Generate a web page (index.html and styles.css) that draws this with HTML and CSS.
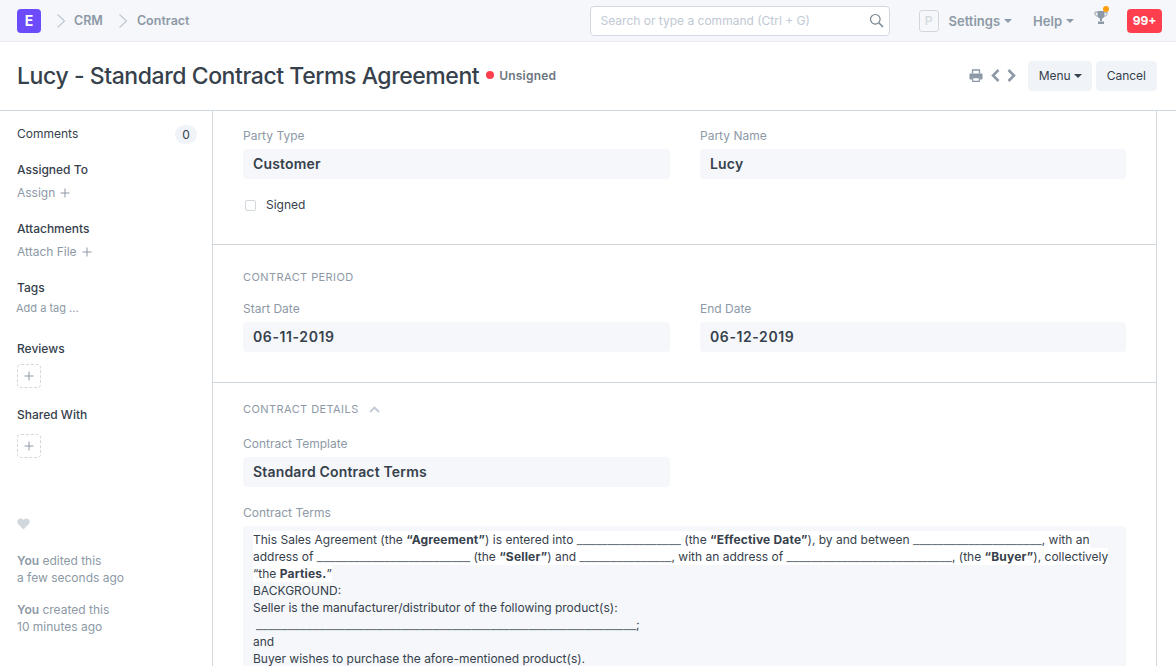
FILE: index.html
```html
<!DOCTYPE html>
<html lang="en">
<head>
<meta charset="utf-8">
<title>Contract</title>
<link rel="stylesheet" href="styles.css">
</head>
<body>
<header class="navbar">
  <div class="logo">E</div>
  <svg class="crumb-sep" width="10" height="16" viewBox="0 0 10 16"><path d="M1.500 1.500 8.500 8 1.500 14.500" fill="none" stroke="#c0c9d4" stroke-width="1.200"/></svg>
  <a class="crumb">CRM</a>
  <svg class="crumb-sep" width="10" height="16" viewBox="0 0 10 16"><path d="M1.500 1.500 8.500 8 1.500 14.500" fill="none" stroke="#c0c9d4" stroke-width="1.200"/></svg>
  <a class="crumb">Contract</a>
  <div class="nav-right">
    <div class="search">
      <span class="search-text">Search or type a command (Ctrl + G)</span>
      <svg width="15" height="15" viewBox="0 0 15 15"><circle cx="6.300" cy="6.300" r="4.800" fill="none" stroke="#74808b" stroke-width="1.200"/><path d="M10 10l4 4" stroke="#74808b" stroke-width="1.400"/></svg>
    </div>
    <div class="avatar">P</div>
    <a class="nav-link nav-settings">Settings<i class="caret"></i></a>
    <a class="nav-link nav-help">Help<i class="caret"></i></a>
    <div class="trophy">
      <svg width="14" height="15" viewBox="0 0 14 15"><path d="M3.500 1h7v4.200c0 2-1.500 3.400-3.500 3.400S3.500 7.200 3.500 5.200zM6 8h2v3H6zM4 11.500h6V14H4z" fill="#8d99a6"/><path d="M3.500 2.200H1v1.500c0 1.500 1.200 2.500 2.800 2.500M10.500 2.200H13v1.500c0 1.500-1.200 2.500-2.800 2.500" fill="none" stroke="#8d99a6" stroke-width="1"/></svg>
      <span class="trophy-dot"></span>
    </div>
    <div class="notif">99+</div>
  </div>
</header>

<section class="titlebar">
  <h1 class="title">Lucy - Standard Contract Terms Agreement</h1>
  <span class="status"><i class="status-dot"></i>Unsigned</span>
  <div class="actions">
    <svg class="print" width="14" height="13" viewBox="0 0 14 13"><path d="M3.500 4.500V1h7v3.500" fill="none" stroke="#8d99a6" stroke-width="1.300"/><path d="M1.500 4.500h11c.6 0 1 .4 1 1v4c0 .6-.4 1-1 1h-1.500V8H3v2.500H1.500c-.6 0-1-.4-1-1v-4c0-.6.4-1 1-1z" fill="#8d99a6"/><path d="M3.700 8.700h6.600V12.300H3.700z" fill="none" stroke="#8d99a6" stroke-width="1.200"/></svg>
    <svg class="chev" width="9" height="13" viewBox="0 0 9 13"><path d="M7.500 1 2 6.500 7.500 12" fill="none" stroke="#8d99a6" stroke-width="2.500"/></svg>
    <svg class="chev chev-next" width="9" height="13" viewBox="0 0 9 13"><path d="M1.500 1 7 6.500 1.500 12" fill="none" stroke="#8d99a6" stroke-width="2.500"/></svg>
    <button class="btn btn-menu">Menu<i class="caret caret-dark"></i></button>
    <button class="btn">Cancel</button>
  </div>
</section>

<div class="layout">
  <aside class="sidebar">
    <div class="comments"><span class="comments-text">Comments</span><span class="pill">0</span></div>
    <h4 class="side-head side-assigned">Assigned To</h4>
    <div class="side-link">Assign<svg class="plus" width="10" height="10" viewBox="0 0 10 10"><path d="M5 .5v9M.5 5h9" stroke="#8d99a6" stroke-width="1"/></svg></div>
    <h4 class="side-head side-attach">Attachments</h4>
    <div class="side-link">Attach File<svg class="plus" width="10" height="10" viewBox="0 0 10 10"><path d="M5 .5v9M.5 5h9" stroke="#8d99a6" stroke-width="1"/></svg></div>
    <h4 class="side-head side-tags">Tags</h4>
    <div class="tag-input">Add a tag ...</div>
    <h4 class="side-head side-reviews">Reviews</h4>
    <div class="add-box add-reviews"><svg width="10" height="10" viewBox="0 0 10 10"><path d="M5 .5v9M.5 5h9" stroke="#8d99a6" stroke-width="1"/></svg></div>
    <h4 class="side-head side-shared">Shared With</h4>
    <div class="add-box add-shared"><svg width="10" height="10" viewBox="0 0 10 10"><path d="M5 .5v9M.5 5h9" stroke="#8d99a6" stroke-width="1"/></svg></div>
    <svg class="heart" width="13" height="12" viewBox="0 0 13 12"><path d="M6.500 11.500 1.300 6.300C-.2 4.800 0 2.500 1.500 1.300 3 .2 5 .4 6.500 2 8 .4 10 .2 11.500 1.300c1.500 1.200 1.700 3.500.2 5z" fill="#d1d8dd"/></svg>
    <p class="activity activity-first"><b>You</b> edited this<br>a few seconds ago</p>
    <p class="activity"><b>You</b> created this<br>10 minutes ago</p>
  </aside>

  <main class="main">
    <section class="form-section sec-party">
      <div class="grid">
        <div class="field"><label class="label">Party Type</label><div class="value">Customer</div></div>
        <div class="field"><label class="label">Party Name</label><div class="value">Lucy</div></div>
      </div>
      <div class="check"><i class="checkbox"></i><span>Signed</span></div>
    </section>
    <section class="form-section sec-period">
      <div class="sec-title">CONTRACT PERIOD</div>
      <div class="grid">
        <div class="field"><label class="label">Start Date</label><div class="value value-date">06-11-2019</div></div>
        <div class="field"><label class="label">End Date</label><div class="value value-date">06-12-2019</div></div>
      </div>
    </section>
    <section class="form-section sec-details">
      <div class="sec-title">CONTRACT DETAILS<svg class="collapse" width="11" height="7" viewBox="0 0 11 7"><path d="M1 6l4.500-4.500L10 6" fill="none" stroke="#c0c9d4" stroke-width="1.800"/></svg></div>
      <div class="grid">
        <div class="field"><label class="label">Contract Template</label><div class="value">Standard Contract Terms</div></div>
      </div>
      <label class="label label-terms">Contract Terms</label>
      <div class="terms"><span class="hl">This Sales Agreement (the <b>“Agreement”</b>) is entered into <span class="u">_________________</span> (the <b>“Effective Date”</b>), by and between <span class="u">_____________________</span>, with an address of <span class="u">_________________________</span> (the <b>“Seller”</b>) and <span class="u">_______________</span>, with an address of <span class="u">___________________________</span>, (the <b>“Buyer”</b>), collectively “the <b>Parties.</b>”</span><br>BACKGROUND:<br>Seller is the manufacturer/distributor of the following product(s):<br><span class="blank"><span class="u u-long">____________________________________________________________</span>;</span><br>and<br>Buyer wishes to purchase the afore-mentioned product(s).</div>
    </section>
  </main>
</div>
</body>
</html>
```
FILE: styles.css
```css
* { box-sizing: border-box; }
html, body { margin: 0; height: 666px; overflow: hidden; }
body { font-family: Inter, "Liberation Sans", sans-serif; background: #fff; color: #36414c; font-size: 12px; }

.navbar { height: 42px; background: #f5f7fa; border-bottom: 1px solid #e8ecf1; display: flex; align-items: center; padding-left: 17px; }
.logo { width: 24px; height: 24px; border-radius: 4px; background: #6b4bfa; color: #fff; font-weight: 700; font-size: 14px; display: flex; align-items: center; justify-content: center; }
.crumb-sep { margin-left: 15px; margin-right: 8px; }
.crumb-sep + .crumb { font-size: 12.5px; font-weight: 600; color: #8d99a6; }
.crumb + .crumb-sep { margin-left: 15px; margin-right: 9px; }
.nav-right { margin-left: auto; display: flex; align-items: center; }
.search { width: 300px; height: 30px; margin-right: 29px; background: #fff; border: 1px solid #d1d8e3; border-radius: 4px; display: flex; align-items: center; justify-content: space-between; padding: 0 5px 0 10px; }
.search-text { font-size: 12px; color: #c0c9d4; }
.avatar { width: 20px; height: 22px; border: 1px solid #d1d8dd; border-radius: 3px; color: #d1d8dd; font-size: 12px; font-weight: 500; display: flex; align-items: center; justify-content: center; margin-right: 10px; }
.nav-link { font-size: 13px; font-weight: 600; color: #8d99a6; display: flex; align-items: center; }
.nav-settings { margin-right: 21px; }
.nav-help { margin-right: 20px; }
.caret { display: inline-block; width: 0; height: 0; border-left: 4px solid transparent; border-right: 4px solid transparent; border-top: 4px solid #8d99a6; margin-left: 4px; }
.trophy { position: relative; width: 14px; height: 15px; margin-right: 19px; margin-top: -6px; }
.trophy svg { display: block; }
.trophy-dot { position: absolute; left: 9px; top: -4px; width: 6px; height: 6px; border-radius: 50%; background: #ff9f0a; }
.notif { width: 35px; height: 24px; border-radius: 4px; background: #ff3f4d; color: #fff; font-size: 12px; font-weight: 700; display: flex; align-items: center; justify-content: center; margin-right: 14px; }

.titlebar { height: 69px; border-bottom: 1px solid #d1d8dd; display: flex; align-items: center; padding: 0 19px 0 17px; }
.title { margin: 0; font-size: 23px; font-weight: 500; letter-spacing: -0.43px; color: #36414c; line-height: 30px; }
.status { margin-left: 7px; margin-bottom: 2px; font-size: 12px; font-weight: 600; letter-spacing: 0.2px; color: #6c7680; display: flex; align-items: center; }
.status-dot { width: 8px; height: 8px; border-radius: 50%; background: #ff3f4d; margin-right: 5px; }
.actions { margin-left: auto; display: flex; align-items: center; }
.print { margin-bottom: 1px; margin-right: 1px; }
.chev { margin-left: 7px; margin-bottom: 1px; }
.chev-next { margin-right: 12px; }
.btn { height: 30px; border: 0; border-radius: 4px; background: #f0f3f7; color: #36414c; font: 400 12px Inter, "Liberation Sans", sans-serif; padding: 0 11px 2px; display: flex; align-items: center; }
.btn-menu { width: 64px; padding-right: 0; margin-right: 4px; }
.caret-dark { border-top-color: #36414c; margin-left: 3px; margin-top: 2px; }

.layout { display: flex; height: 555px; }
.sidebar { width: 213px; flex: none; border-right: 1px solid #d1d8dd; padding: 0 15px 0 17px; display: flex; flex-direction: column; align-items: flex-start; color: #36414c; }
.comments { width: 100%; height: 20px; margin-top: 13px; display: flex; justify-content: space-between; align-items: center; }
.comments-text { padding-bottom: 2px; }
.pill { width: 22px; height: 19px; border-radius: 10px; background: #f0f3f7; display: flex; align-items: center; justify-content: center; }
.side-head { margin: 0; font-size: 12px; font-weight: 500; line-height: 16px; }
.side-assigned { margin-top: 18px; }
.side-attach { margin-top: 20px; }
.side-tags { margin-top: 20px; }
.side-reviews { margin-top: 26px; }
.side-shared { margin-top: 19px; }
.side-link { margin-top: 7px; line-height: 16px; color: #8d99a6; display: flex; align-items: center; }
.plus { margin-left: 5px; }
.tag-input { margin-top: 5px; margin-left: -1px; font-size: 11px; line-height: 14px; color: #8d99a6; }
.add-box { width: 24px; height: 24px; border: 1px dashed #d1d8dd; border-radius: 4px; display: flex; align-items: center; justify-content: center; }
.add-reviews { margin-top: 7px; }
.add-shared { margin-top: 11px; }
.heart { margin-top: 60px; }
.activity { margin: 0; line-height: 17px; color: #8d99a6; }
.activity b { font-weight: 600; }
.activity-first { margin-top: 22px; margin-bottom: 15px; }

.main { width: 944px; flex: none; border-right: 1px solid #d1d8dd; }
.form-section { border-bottom: 1px solid #d1d8dd; padding: 0 30px; }
.sec-party { height: 134px; padding-top: 17px; }
.sec-period { height: 138px; padding-top: 24px; }
.sec-details { padding-top: 18px; border-bottom: 0; }
.grid { display: grid; grid-template-columns: 427px 426px; column-gap: 30px; }
.label { display: block; font-size: 12px; line-height: 16px; color: #8d99a6; }
.value { margin-top: 5px; height: 30px; border-radius: 4px; background: #f5f7fa; padding: 0 10px; font-size: 14px; font-weight: 600; letter-spacing: 0.17px; line-height: 30px; color: #36414c; }
.value-date { letter-spacing: 0.6px; }
.check { margin-top: 18px; display: flex; align-items: center; font-size: 12px; line-height: 16px; margin-left: 2px; }
.checkbox { width: 11px; height: 11px; border: 1px solid #d1d8dd; border-radius: 2px; margin-right: 10px; }
.sec-title { font-size: 11px; line-height: 16px; letter-spacing: 0.42px; color: #8d99a6; margin-bottom: 16px; display: flex; align-items: center; }
.sec-details .sec-title { margin-bottom: 19px; }
.collapse { margin-left: 10px; }
.label-terms { margin-top: 18px; }
.terms { margin-top: 5px; height: 140px; width: 883px; padding: 5px 6px 5px 10px; border-radius: 4px 4px 0 0; background: #f5f7fa; font-size: 12px; line-height: 17px; color: #36414c; overflow: hidden; }
.terms b { font-weight: 700; letter-spacing: 0.18px; }
.hl { background: #fff; padding: 1.25px 0; }
.u { font-size: 13.45px; line-height: 0; color: #6c7680; }
.u-long { font-size: 13.9px; }
.blank { margin-left: 3px; }
```
